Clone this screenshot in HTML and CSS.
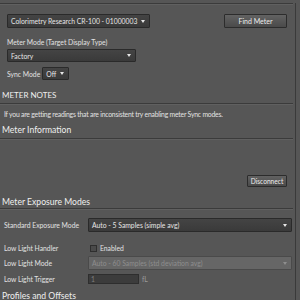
FILE: index.html
```html
<!DOCTYPE html>
<html lang="en">
<head>
    <meta charset="UTF-8">
    <title>Meter Settings</title>
    <link rel="stylesheet" href="styles.css">
</head>
<body>
    <div class="panel">
        <div class="rule top-rule"></div>

        <div class="device-row">
            <div class="select device-select">
                <span>Colorimetry Research CR-100 - 01000003</span>
                <span class="arrow"></span>
            </div>
            <button class="btn find-btn">Find Meter</button>
        </div>

        <div class="field-label">Meter Mode (Target Display Type)</div>
        <div class="select mode-select">
            <span>Factory</span>
            <span class="arrow"></span>
        </div>

        <div class="sync-row">
            <span>Sync Mode</span>
            <div class="select sync-select">
                <span>Off</span>
                <span class="arrow"></span>
            </div>
        </div>

        <h3 class="heading caps">METER NOTES</h3>
        <div class="rule"></div>
        <p class="note">If you are getting readings that are inconsistent try enabling meter Sync modes.</p>

        <h3 class="heading info-heading">Meter Information</h3>
        <div class="rule"></div>

        <div class="disconnect-row">
            <button class="btn disconnect-btn">Disconnect</button>
        </div>

        <h3 class="heading exposure-heading">Meter Exposure Modes</h3>
        <div class="rule"></div>

        <div class="form-row std-row">
            <span class="row-label">Standard Exposure Mode</span>
            <div class="select wide-select">
                <span>Auto - 5 Samples (simple avg)</span>
                <span class="arrow"></span>
            </div>
        </div>
        <div class="form-row handler-row">
            <span class="row-label">Low Light Handler</span>
            <label class="check"><span class="box"></span>Enabled</label>
        </div>
        <div class="form-row">
            <span class="row-label">Low Light Mode</span>
            <div class="select wide-select disabled">
                <span>Auto - 60 Samples (std deviation avg)</span>
                <span class="arrow"></span>
            </div>
        </div>
        <div class="form-row trigger-row">
            <span class="row-label">Low Light Trigger</span>
            <div class="text-input">1</div>
            <span class="unit">fL</span>
        </div>

        <h3 class="heading profiles-heading">Profiles and Offsets</h3>
    </div>
</body>
</html>
```

FILE: styles.css
```css
body {
    margin: 0;
    width: 300px;
    height: 300px;
    overflow: hidden;
    background-color: #565656;
    font-family: Lato, "Open Sans", sans-serif;
    font-size: 6.8px;
    color: #e2e2e2;
}
.panel {
    width: 296px;
    height: 300px;
    border-right: 1px solid #3a3a3a;
    box-sizing: border-box;
}
.rule {
    height: 1px;
    margin-right: 2px;
    background-color: #3b3b3b;
    border-bottom: 1px solid #606060;
}
.top-rule {
    margin-top: 3px;
}
.select {
    display: flex;
    align-items: center;
    justify-content: space-between;
    box-sizing: border-box;
    padding: 0 4px 0 3px;
    background: linear-gradient(#444, #3a3a3a);
    border: 1px solid #2a2a2a;
    border-radius: 1px;
    color: #e6e6e6;
    white-space: nowrap;
    overflow: hidden;
}
.arrow {
    width: 0;
    height: 0;
    border-left: 2px solid transparent;
    border-right: 2px solid transparent;
    border-top: 3px solid #e6e6e6;
    flex-shrink: 0;
}
.btn {
    box-sizing: border-box;
    padding: 0;
    background: linear-gradient(#626262, #4a4a4a);
    border: 1px solid #2c2c2c;
    border-radius: 1px;
    color: #ececec;
    font-family: inherit;
    font-size: 7px;
}
.device-row {
    display: flex;
    justify-content: space-between;
    padding: 9px 8px 0 7px;
}
.device-select {
    width: 143px;
    height: 14px;
}
.find-btn {
    width: 63px;
    height: 14px;
}
.field-label {
    margin: 10px 0 0 7px;
    line-height: 8px;
}
.mode-select {
    margin: 3px 0 0 7px;
    width: 129px;
    height: 13px;
}
.sync-row {
    display: flex;
    align-items: center;
    gap: 2px;
    margin: 5px 0 0 7px;
}
.sync-select {
    width: 27px;
    height: 13px;
}
.heading {
    margin: 10px 0 3px 2px;
    font-size: 8.6px;
    font-weight: normal;
    line-height: 10px;
    color: #efefef;
}
.caps {
    font-size: 8px;
}
.note {
    margin: 5px 0 0 4px;
    line-height: 8px;
    letter-spacing: -0.2px;
}
.info-heading {
    margin-top: 7px;
}
.disconnect-row {
    display: flex;
    justify-content: flex-end;
    padding: 35px 8px 0 0;
}
.disconnect-btn {
    width: 40px;
    height: 12px;
    font-size: 6.6px;
}
.exposure-heading {
    margin-top: 10px;
    margin-bottom: 1px;
}
.form-row {
    display: flex;
    align-items: center;
    height: 14px;
    padding-left: 4px;
    margin-top: 1px;
}
.std-row {
    margin-top: 8px;
}
.handler-row {
    margin-top: 9px;
}
.trigger-row {
    margin-top: 3px;
    height: 12px;
}
.row-label {
    width: 84px;
    flex-shrink: 0;
}
.wide-select {
    width: 204px;
    height: 14px;
}
.select.disabled {
    background: #666;
    border-color: #4a4a4a;
    color: #8e8e8e;
}
.select.disabled .arrow {
    border-top-color: #8e8e8e;
}
.check {
    display: flex;
    align-items: center;
    gap: 3px;
    margin-left: 2px;
}
.box {
    width: 7px;
    height: 7px;
    box-sizing: border-box;
    background-color: #4a4a4a;
    border: 1px solid #2e2e2e;
}
.text-input {
    box-sizing: border-box;
    width: 51px;
    height: 10px;
    padding-left: 2px;
    line-height: 8px;
    background-color: #3c3c3c;
    border: 1px solid #2e2e2e;
    color: #7d7d7d;
}
.unit {
    margin-left: 3px;
    color: #9a9a9a;
}
.profiles-heading {
    margin-top: 6px;
}
```
